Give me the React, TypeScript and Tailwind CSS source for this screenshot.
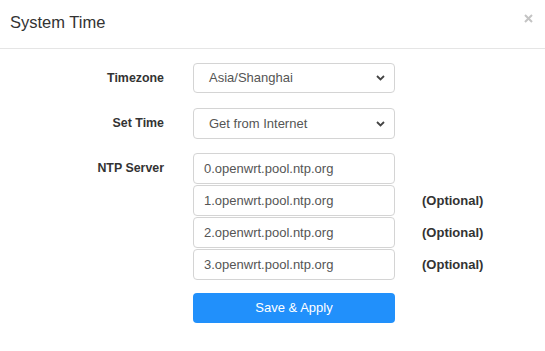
import { ReactNode } from "react";

const font = { fontFamily: '"Liberation Sans", Arial, sans-serif' };

function Chevron() {
  return (
    <svg width="9" height="6" viewBox="0 0 9 6" className="shrink-0">
      <path d="M1 1l3.5 3.5L8 1" fill="none" stroke="#444" strokeWidth="1.8" />
    </svg>
  );
}

function Row({ label, children, extra }: { label?: string; children: ReactNode; extra?: string }) {
  return (
    <div className="flex items-center">
      <div className="w-[165px] pr-px text-right text-[12.4px] font-bold text-[#333]">{label}</div>
      <div className="ml-[28px] w-[202px]">{children}</div>
      {extra && <div className="ml-[27px] text-[13px] font-bold text-[#333]">{extra}</div>}
    </div>
  );
}

function Select({ value, tall }: { value: string; tall?: boolean }) {
  return (
    <div
      className={`flex items-center justify-between rounded-[4px] border border-[#d4d4d4] bg-white pl-[15px] pr-[9px] text-[13px] text-[#555] ${tall ? "h-[31px]" : "h-[30px]"}`}
    >
      <span>{value}</span>
      <Chevron />
    </div>
  );
}

function Input({ value }: { value: string }) {
  return (
    <div className="flex h-[31px] items-center rounded-[4px] border border-[#d4d4d4] bg-white pl-[10px] text-[13px] text-[#555]">
      {value}
    </div>
  );
}

export default function App() {
  const servers = ["0.openwrt.pool.ntp.org", "1.openwrt.pool.ntp.org", "2.openwrt.pool.ntp.org", "3.openwrt.pool.ntp.org"];

  return (
    <div className="h-[351px] w-[545px] bg-white" style={font}>
      <div className="flex h-[49px] items-center justify-between border-b border-[#e5e5e5] pl-[10px] pr-[12px]">
        <h1 className="-mt-[4px] text-[16.5px] text-[#333]">System Time</h1>
        <svg width="9" height="9" viewBox="0 0 9 9" className="-mt-[12px]">
          <path d="M1 1l7 7M8 1l-7 7" stroke="#c4c4c4" strokeWidth="2" />
        </svg>
      </div>

      <div className="flex flex-col pt-[14px]">
        <Row label="Timezone">
          <Select value="Asia/Shanghai" />
        </Row>
        <div className="mt-[15px]">
          <Row label="Set Time">
            <Select value="Get from Internet" tall />
          </Row>
        </div>
        <div className="mt-[14px] flex flex-col gap-px">
          {servers.map((s, i) => (
            <Row key={s} label={i === 0 ? "NTP Server" : undefined} extra={i > 0 ? "(Optional)" : undefined}>
              <Input value={s} />
            </Row>
          ))}
        </div>
        <div className="mt-[13px]">
          <Row>
            <button
              type="button"
              className="flex h-[30px] w-full items-center justify-center rounded-[4px] bg-[#2190fb] text-[13px] text-white"
            >
              Save &amp; Apply
            </button>
          </Row>
        </div>
      </div>
    </div>
  );
}
